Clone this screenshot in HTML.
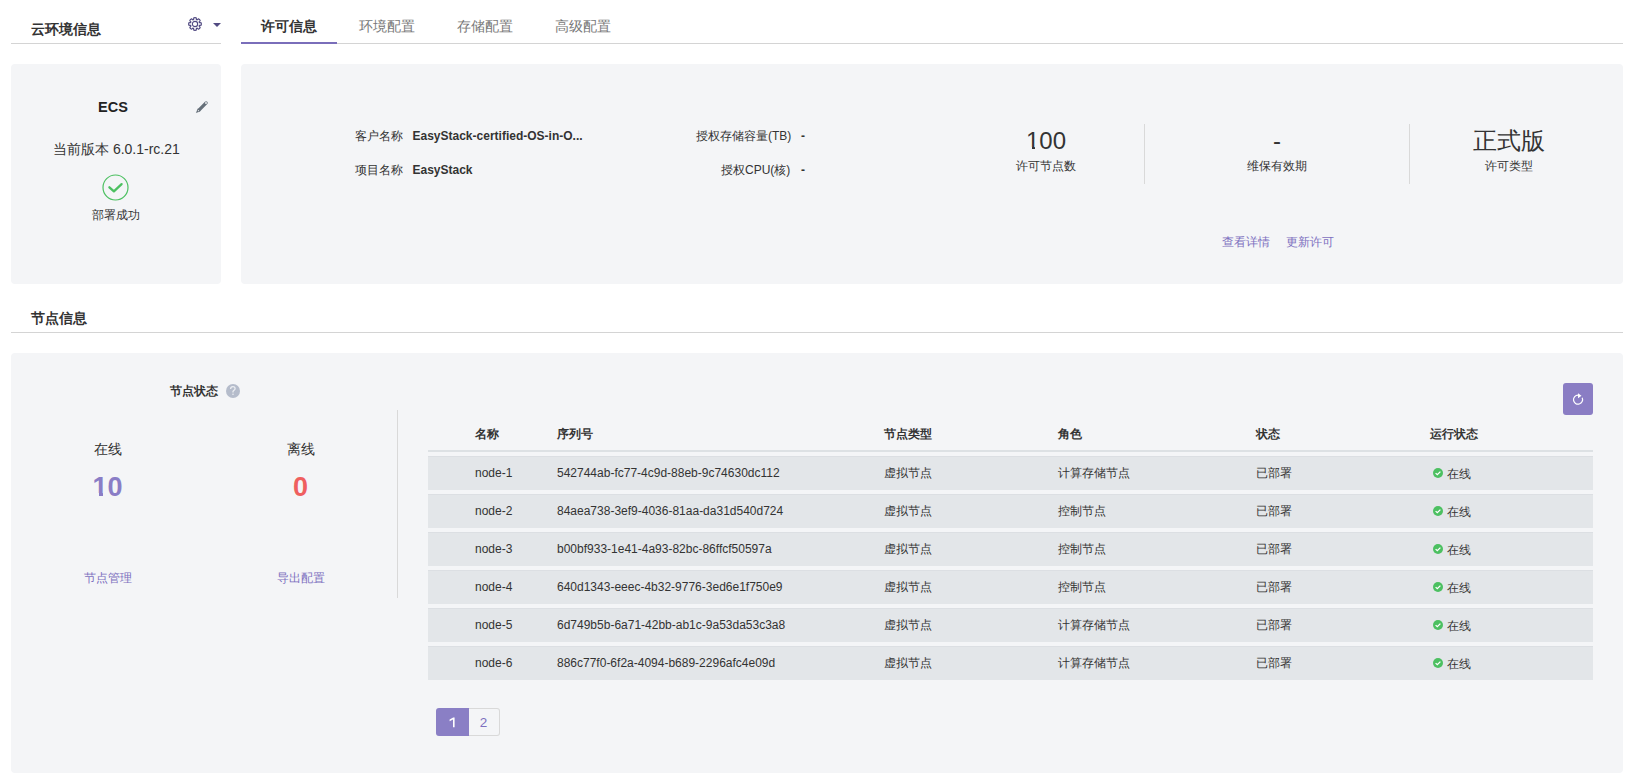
<!DOCTYPE html>
<html><head><meta charset="utf-8">
<style>
*{margin:0;padding:0;box-sizing:border-box}
html,body{width:1626px;height:779px;overflow:hidden;background:#fff}
body{font-family:"Liberation Sans",sans-serif;color:#333;position:relative}
.a{position:absolute;white-space:nowrap}
.panel{position:absolute;background:#f4f5f7;border-radius:4px}
.hline{position:absolute;height:1px;background:#d4d4d4}
.vline{position:absolute;width:1px;background:#d9d9d9}
.t12{font-size:12px;line-height:14px}
.t14{font-size:14px;line-height:16px}
.b{font-weight:bold}
.purple{color:#7d70bf}
.tab{position:absolute;top:17px;font-size:14px;line-height:18px;color:#777}
.row{position:absolute;left:428px;width:1165px;height:34px;background:#e3e6e9;border-top:1px solid #dcdfe3}
.cell{position:absolute;font-size:12px;line-height:14px;top:9px;color:#333}
.hd{position:absolute;top:427px;font-size:12px;line-height:14px;font-weight:bold;color:#333}
.ok{position:absolute;width:10px;height:10px;border-radius:50%;background:#4cc061}
</style></head><body>

<!-- top left header -->
<div class="a t14 b" style="left:31px;top:21px;">云环境信息</div>
<svg class="a" style="left:188px;top:17px" width="15" height="15" viewBox="0.5 0.5 15 15"><circle cx="7.5" cy="7.5" r="2.65" fill="none" stroke="#514a82" stroke-width="1.1"/><path d="M13.80 7.50L13.80 7.62L13.80 7.75L13.79 7.87L13.78 7.99L13.77 8.12L13.76 8.24L13.74 8.36L13.72 8.49L13.65 8.60L13.48 8.69L13.23 8.76L12.93 8.80L12.61 8.83L12.32 8.86L12.08 8.89L11.91 8.93L11.85 9.01L11.82 9.09L11.78 9.18L11.75 9.26L11.71 9.34L11.68 9.43L11.64 9.51L11.64 9.61L11.72 9.75L11.87 9.95L12.06 10.17L12.26 10.42L12.44 10.66L12.57 10.89L12.63 11.07L12.60 11.20L12.52 11.30L12.45 11.40L12.37 11.50L12.29 11.59L12.21 11.68L12.13 11.78L12.04 11.87L11.95 11.95L11.87 12.04L11.78 12.13L11.68 12.21L11.59 12.29L11.50 12.37L11.40 12.45L11.30 12.52L11.20 12.60L11.07 12.63L10.89 12.57L10.66 12.44L10.42 12.26L10.17 12.06L9.95 11.87L9.75 11.72L9.61 11.64L9.51 11.64L9.43 11.68L9.34 11.71L9.26 11.75L9.18 11.78L9.09 11.82L9.01 11.85L8.93 11.91L8.89 12.08L8.86 12.32L8.83 12.61L8.80 12.93L8.76 13.23L8.69 13.48L8.60 13.65L8.49 13.72L8.36 13.74L8.24 13.76L8.12 13.77L7.99 13.78L7.87 13.79L7.75 13.80L7.62 13.80L7.50 13.80L7.38 13.80L7.25 13.80L7.13 13.79L7.01 13.78L6.88 13.77L6.76 13.76L6.64 13.74L6.51 13.72L6.40 13.65L6.31 13.48L6.24 13.23L6.20 12.93L6.17 12.61L6.14 12.32L6.11 12.08L6.07 11.91L5.99 11.85L5.91 11.82L5.82 11.78L5.74 11.75L5.66 11.71L5.57 11.68L5.49 11.64L5.39 11.64L5.25 11.72L5.05 11.87L4.83 12.06L4.58 12.26L4.34 12.44L4.11 12.57L3.93 12.63L3.80 12.60L3.70 12.52L3.60 12.45L3.50 12.37L3.41 12.29L3.32 12.21L3.22 12.13L3.13 12.04L3.05 11.95L2.96 11.87L2.87 11.78L2.79 11.68L2.71 11.59L2.63 11.50L2.55 11.40L2.48 11.30L2.40 11.20L2.37 11.07L2.43 10.89L2.56 10.66L2.74 10.42L2.94 10.17L3.13 9.95L3.28 9.75L3.36 9.61L3.36 9.51L3.32 9.43L3.29 9.34L3.25 9.26L3.22 9.18L3.18 9.09L3.15 9.01L3.09 8.93L2.92 8.89L2.68 8.86L2.39 8.83L2.07 8.80L1.77 8.76L1.52 8.69L1.35 8.60L1.28 8.49L1.26 8.36L1.24 8.24L1.23 8.12L1.22 7.99L1.21 7.87L1.20 7.75L1.20 7.62L1.20 7.50L1.20 7.38L1.20 7.25L1.21 7.13L1.22 7.01L1.23 6.88L1.24 6.76L1.26 6.64L1.28 6.51L1.35 6.40L1.52 6.31L1.77 6.24L2.07 6.20L2.39 6.17L2.68 6.14L2.92 6.11L3.09 6.07L3.15 5.99L3.18 5.91L3.22 5.82L3.25 5.74L3.29 5.66L3.32 5.57L3.36 5.49L3.36 5.39L3.28 5.25L3.13 5.05L2.94 4.83L2.74 4.58L2.56 4.34L2.43 4.11L2.37 3.93L2.40 3.80L2.48 3.70L2.55 3.60L2.63 3.50L2.71 3.41L2.79 3.32L2.87 3.22L2.96 3.13L3.05 3.05L3.13 2.96L3.22 2.87L3.32 2.79L3.41 2.71L3.50 2.63L3.60 2.55L3.70 2.48L3.80 2.40L3.93 2.37L4.11 2.43L4.34 2.56L4.58 2.74L4.83 2.94L5.05 3.13L5.25 3.28L5.39 3.36L5.49 3.36L5.57 3.32L5.66 3.29L5.74 3.25L5.82 3.22L5.91 3.18L5.99 3.15L6.07 3.09L6.11 2.92L6.14 2.68L6.17 2.39L6.20 2.07L6.24 1.77L6.31 1.52L6.40 1.35L6.51 1.28L6.64 1.26L6.76 1.24L6.88 1.23L7.01 1.22L7.13 1.21L7.25 1.20L7.38 1.20L7.50 1.20L7.62 1.20L7.75 1.20L7.87 1.21L7.99 1.22L8.12 1.23L8.24 1.24L8.36 1.26L8.49 1.28L8.60 1.35L8.69 1.52L8.76 1.77L8.80 2.07L8.83 2.39L8.86 2.68L8.89 2.92L8.93 3.09L9.01 3.15L9.09 3.18L9.18 3.22L9.26 3.25L9.34 3.29L9.43 3.32L9.51 3.36L9.61 3.36L9.75 3.28L9.95 3.13L10.17 2.94L10.42 2.74L10.66 2.56L10.89 2.43L11.07 2.37L11.20 2.40L11.30 2.48L11.40 2.55L11.50 2.63L11.59 2.71L11.68 2.79L11.78 2.87L11.87 2.96L11.95 3.05L12.04 3.13L12.13 3.22L12.21 3.32L12.29 3.41L12.37 3.50L12.45 3.60L12.52 3.70L12.60 3.80L12.63 3.93L12.57 4.11L12.44 4.34L12.26 4.58L12.06 4.83L11.87 5.05L11.72 5.25L11.64 5.39L11.64 5.49L11.68 5.57L11.71 5.66L11.75 5.74L11.78 5.82L11.82 5.91L11.85 5.99L11.91 6.07L12.08 6.11L12.32 6.14L12.61 6.17L12.93 6.20L13.23 6.24L13.48 6.31L13.65 6.40L13.72 6.51L13.74 6.64L13.76 6.76L13.77 6.88L13.78 7.01L13.79 7.13L13.80 7.25L13.80 7.38Z" fill="none" stroke="#514a82" stroke-width="1.2" stroke-linejoin="round"/></svg>
<div class="a" style="left:213px;top:23px;width:0;height:0;border-left:4px solid transparent;border-right:4px solid transparent;border-top:4px solid #514a82"></div>
<div class="hline" style="left:11px;top:43px;width:210px"></div>

<!-- tabs -->
<div class="tab b" style="left:261px;color:#333">许可信息</div>
<div class="tab" style="left:359px">环境配置</div>
<div class="tab" style="left:457px">存储配置</div>
<div class="tab" style="left:555px">高级配置</div>
<div class="hline" style="left:241px;top:43px;width:1382px"></div>
<div class="a" style="left:241px;top:42px;width:96px;height:2px;background:#7a6eba"></div>

<!-- left card -->
<div class="panel" style="left:11px;top:64px;width:210px;height:220px"></div>
<div class="a b" style="left:98px;top:99px;font-size:14.5px;line-height:16px;color:#222">ECS</div>
<svg class="a" style="left:195px;top:100px" width="14" height="14" viewBox="0 0 14 14"><path d="M4.2 9.8L11.1 2.9" stroke="#66707a" stroke-width="3.3" stroke-linecap="round"/><path d="M3.1 8.7L5.3 10.9L1.4 12.6Z" fill="#66707a" stroke="#66707a" stroke-width="0.6" stroke-linejoin="round"/><circle cx="11.0" cy="3.0" r="0.95" fill="#f0f1f3"/><circle cx="3.5" cy="10.6" r="0.55" fill="#e4e7ea"/></svg>
<div class="a t14" style="left:53px;top:141px">当前版本 6.0.1-rc.21</div>
<svg class="a" style="left:102px;top:174px" width="27" height="27" viewBox="0 0 27 27"><circle cx="13.5" cy="13.5" r="12.5" fill="none" stroke="#4cc061" stroke-width="1.2"/><path d="M7.4 13.3L11.9 17.3L19.6 10.1" fill="none" stroke="#4cc061" stroke-width="2.3" stroke-linecap="round" stroke-linejoin="round"/></svg>
<div class="a t12" style="left:92px;top:208px">部署成功</div>

<!-- license panel -->
<div class="panel" style="left:241px;top:64px;width:1382px;height:220px"></div>
<div class="a t12" style="left:355px;top:129px">客户名称</div>
<div class="a t12 b" style="left:412.5px;top:129px">EasyStack-certified-OS-in-O...</div>
<div class="a t12" style="left:355px;top:163px">项目名称</div>
<div class="a t12 b" style="left:412.5px;top:163px">EasyStack</div>
<div class="a t12" style="left:696px;top:129px">授权存储容量(TB)</div>
<div class="a t12 b" style="left:801px;top:129px">-</div>
<div class="a t12" style="left:721px;top:163px">授权CPU(核)</div>
<div class="a t12 b" style="left:801px;top:163px">-</div>

<div class="a" style="left:946px;top:127px;width:200px;text-align:center;font-size:24px;line-height:28px">100</div>
<div class="a t12" style="left:946px;top:159px;width:200px;text-align:center">许可节点数</div>
<div class="vline" style="left:1144px;top:124px;height:60px"></div>
<div class="a" style="left:1177px;top:127px;width:200px;text-align:center;font-size:24px;line-height:28px">-</div>
<div class="a t12" style="left:1177px;top:159px;width:200px;text-align:center">维保有效期</div>
<div class="vline" style="left:1409px;top:124px;height:60px"></div>
<div class="a" style="left:1409px;top:127px;width:200px;text-align:center;font-size:24px;line-height:28px">正式版</div>
<div class="a t12" style="left:1409px;top:159px;width:200px;text-align:center">许可类型</div>

<div class="a t12 purple" style="left:1222px;top:235px">查看详情</div>
<div class="a t12 purple" style="left:1286px;top:235px">更新许可</div>

<!-- node info header -->
<div class="a t14 b" style="left:31px;top:310px">节点信息</div>
<div class="hline" style="left:11px;top:332px;width:1612px"></div>

<!-- node panel -->
<div class="panel" style="left:11px;top:353px;width:1612px;height:420px"></div>
<div class="a t12 b" style="left:170px;top:384px">节点状态</div>
<svg class="a" style="left:226px;top:384px" width="14" height="14" viewBox="0 0 14 14"><circle cx="7" cy="7" r="7" fill="#b5bccb"/><path d="M4.6 5.1C4.6 3.5 5.6 2.7 6.9 2.7C8.2 2.7 9.1 3.5 9.1 4.7C9.1 6 7.4 6.4 7 7.5L7 8.4" fill="none" stroke="#eceef2" stroke-width="1.25"/><circle cx="7" cy="10.2" r="0.8" fill="#eceef2"/></svg>

<div class="a t14" style="left:94px;top:441px">在线</div>
<div class="a b purple" style="left:70px;top:472px;width:75px;text-align:center;font-size:27px;line-height:30px;color:#8a7dc6">10</div>
<div class="a t14" style="left:287px;top:441px">离线</div>
<div class="a b" style="left:263px;top:472px;width:75px;text-align:center;font-size:27px;line-height:30px;color:#ef5f5f">0</div>
<div class="a t12 purple" style="left:84px;top:571px">节点管理</div>
<div class="a t12 purple" style="left:277px;top:571px">导出配置</div>
<div class="vline" style="left:397px;top:410px;height:188px"></div>

<div class="a" style="left:1026px;top:147px;width:6px;height:2px;background:#f4f5f7"></div><div class="a" style="left:1035px;top:147px;width:4px;height:2px;background:#f4f5f7"></div>
<div class="a" style="left:93px;top:493px;width:6px;height:3px;background:#f4f5f7"></div><div class="a" style="left:103px;top:493px;width:5px;height:3px;background:#f4f5f7"></div>
<!-- refresh button -->
<div class="a" style="left:1563px;top:383px;width:30px;height:32px;border-radius:3px;background:#8a7dc4"></div>
<svg class="a" style="left:1571px;top:392px" width="14" height="14" viewBox="0 0 14 14"><path d="M11.2 5.8A4.55 4.55 0 1 1 7.2 3.1" fill="none" stroke="#fff" stroke-width="1.2"/><path d="M7 1.2L10.5 3.7L7 6.2Z" fill="#fff"/></svg>

<!-- table header -->
<div class="hd" style="left:475px">名称</div>
<div class="hd" style="left:557px">序列号</div>
<div class="hd" style="left:884px">节点类型</div>
<div class="hd" style="left:1058px">角色</div>
<div class="hd" style="left:1256px">状态</div>
<div class="hd" style="left:1430px">运行状态</div>
<div class="a" style="left:428px;top:450px;width:1165px;height:2px;background:#dde1e4"></div>

<div class="row" style="top:456px"><div class="cell" style="left:47px">node-1</div><div class="cell" style="left:129px">542744ab-fc77-4c9d-88eb-9c74630dc112</div><div class="cell" style="left:456px">虚拟节点</div><div class="cell" style="left:630px">计算存储节点</div><div class="cell" style="left:828px">已部署</div><div class="ok" style="left:1005px;top:11px"><svg width="10" height="10" viewBox="0 0 10 10" style="display:block"><path d="M2.6 5.1l1.7 1.6 3.1-3.1" fill="none" stroke="#fff" stroke-width="1.3"/></svg></div><div class="cell" style="left:1019px;top:10px">在线</div></div>
<div class="row" style="top:494px"><div class="cell" style="left:47px">node-2</div><div class="cell" style="left:129px">84aea738-3ef9-4036-81aa-da31d540d724</div><div class="cell" style="left:456px">虚拟节点</div><div class="cell" style="left:630px">控制节点</div><div class="cell" style="left:828px">已部署</div><div class="ok" style="left:1005px;top:11px"><svg width="10" height="10" viewBox="0 0 10 10" style="display:block"><path d="M2.6 5.1l1.7 1.6 3.1-3.1" fill="none" stroke="#fff" stroke-width="1.3"/></svg></div><div class="cell" style="left:1019px;top:10px">在线</div></div>
<div class="row" style="top:532px"><div class="cell" style="left:47px">node-3</div><div class="cell" style="left:129px">b00bf933-1e41-4a93-82bc-86ffcf50597a</div><div class="cell" style="left:456px">虚拟节点</div><div class="cell" style="left:630px">控制节点</div><div class="cell" style="left:828px">已部署</div><div class="ok" style="left:1005px;top:11px"><svg width="10" height="10" viewBox="0 0 10 10" style="display:block"><path d="M2.6 5.1l1.7 1.6 3.1-3.1" fill="none" stroke="#fff" stroke-width="1.3"/></svg></div><div class="cell" style="left:1019px;top:10px">在线</div></div>
<div class="row" style="top:570px"><div class="cell" style="left:47px">node-4</div><div class="cell" style="left:129px">640d1343-eeec-4b32-9776-3ed6e1f750e9</div><div class="cell" style="left:456px">虚拟节点</div><div class="cell" style="left:630px">控制节点</div><div class="cell" style="left:828px">已部署</div><div class="ok" style="left:1005px;top:11px"><svg width="10" height="10" viewBox="0 0 10 10" style="display:block"><path d="M2.6 5.1l1.7 1.6 3.1-3.1" fill="none" stroke="#fff" stroke-width="1.3"/></svg></div><div class="cell" style="left:1019px;top:10px">在线</div></div>
<div class="row" style="top:608px"><div class="cell" style="left:47px">node-5</div><div class="cell" style="left:129px">6d749b5b-6a71-42bb-ab1c-9a53da53c3a8</div><div class="cell" style="left:456px">虚拟节点</div><div class="cell" style="left:630px">计算存储节点</div><div class="cell" style="left:828px">已部署</div><div class="ok" style="left:1005px;top:11px"><svg width="10" height="10" viewBox="0 0 10 10" style="display:block"><path d="M2.6 5.1l1.7 1.6 3.1-3.1" fill="none" stroke="#fff" stroke-width="1.3"/></svg></div><div class="cell" style="left:1019px;top:10px">在线</div></div>
<div class="row" style="top:646px"><div class="cell" style="left:47px">node-6</div><div class="cell" style="left:129px">886c77f0-6f2a-4094-b689-2296afc4e09d</div><div class="cell" style="left:456px">虚拟节点</div><div class="cell" style="left:630px">计算存储节点</div><div class="cell" style="left:828px">已部署</div><div class="ok" style="left:1005px;top:11px"><svg width="10" height="10" viewBox="0 0 10 10" style="display:block"><path d="M2.6 5.1l1.7 1.6 3.1-3.1" fill="none" stroke="#fff" stroke-width="1.3"/></svg></div><div class="cell" style="left:1019px;top:10px">在线</div></div>
<div class="a" style="left:436px;top:708px;width:33px;height:28px;background:#8a7fc5;border-radius:3px 0 0 3px"></div><svg class="a" style="left:436px;top:708px" width="33" height="28" viewBox="0 0 33 28"><path d="M13.6 11.6L17.2 9.5L18.6 9.5L18.6 19.3L17.0 19.3L17.0 11.6L13.6 13.3Z" fill="#fff"/></svg>
<div class="a" style="left:469px;top:708px;width:31px;height:28px;border:1px solid #d9d9d9;border-left:none;border-radius:0 3px 3px 0;color:#7d70bf;font-size:13.5px;line-height:27px;text-align:center;padding-right:1px">2</div>
</body></html>
